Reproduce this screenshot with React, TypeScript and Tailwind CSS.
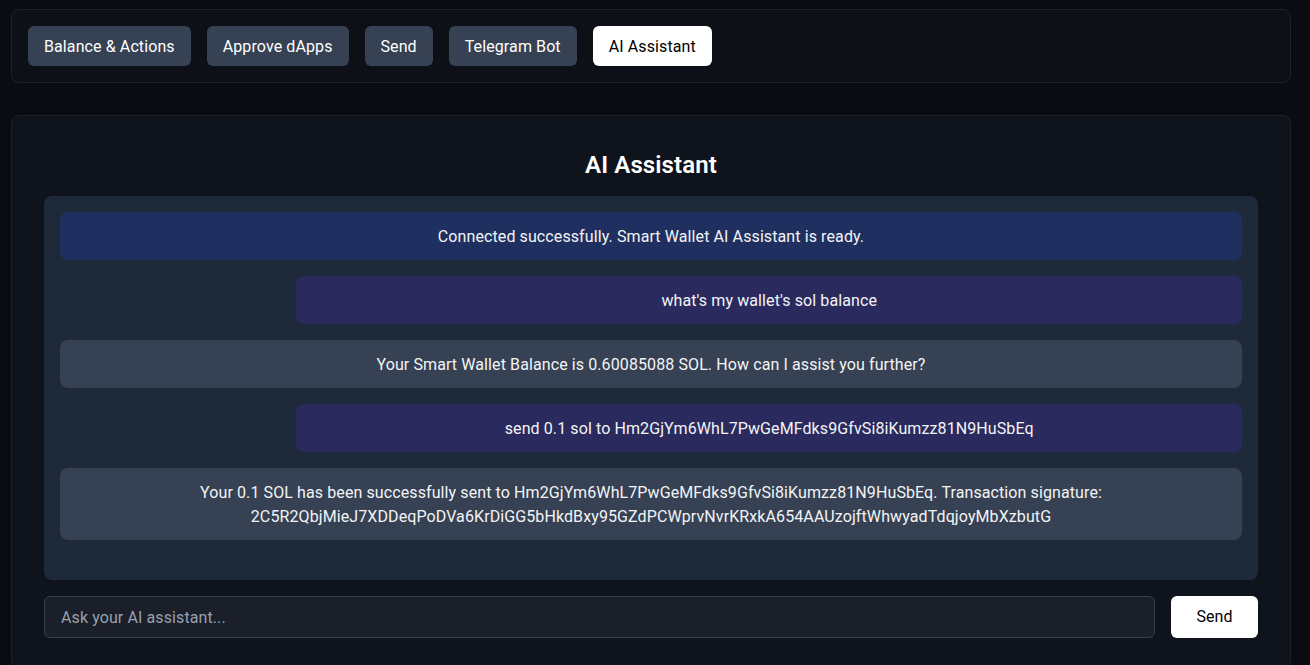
import { useState } from "react";

const tabs = ["Balance & Actions", "Approve dApps", "Send", "Telegram Bot", "AI Assistant"];

type Msg = { role: "system" | "user" | "assistant"; text: string };

const messages: Msg[] = [
  { role: "system", text: "Connected successfully. Smart Wallet AI Assistant is ready." },
  { role: "user", text: "what's my wallet's sol balance" },
  { role: "assistant", text: "Your Smart Wallet Balance is 0.60085088 SOL. How can I assist you further?" },
  { role: "user", text: "send 0.1 sol to Hm2GjYm6WhL7PwGeMFdks9GfvSi8iKumzz81N9HuSbEq" },
  {
    role: "assistant",
    text: "Your 0.1 SOL has been successfully sent to Hm2GjYm6WhL7PwGeMFdks9GfvSi8iKumzz81N9HuSbEq. Transaction signature: 2C5R2QbjMieJ7XDDeqPoDVa6KrDiGG5bHkdBxy95GZdPCWprvNvrKRxkA654AAUzojftWhwyadTdqjoyMbXzbutG",
  },
];

export default function App() {
  const [active, setActive] = useState("AI Assistant");
  const [input, setInput] = useState("");

  return (
    <div className="min-h-screen bg-[#0a0c11] pl-[11px] pt-[9px] font-['Roboto',sans-serif] tracking-[0.1px] text-white">
      <div className="w-[1280px]">
        <div className="mb-8 flex gap-4 rounded-lg border border-[#1c222c] bg-[#0d1017] p-4">
          {tabs.map((t) => (
            <button
              key={t}
              onClick={() => setActive(t)}
              className={`h-10 rounded-md px-4 pt-0.5 text-base ${
                active === t ? "bg-white text-black" : "bg-gray-700 text-white"
              }`}
            >
              {t}
            </button>
          ))}
        </div>

        <div className="rounded-lg border border-[#1c222c] bg-[#0f131c] p-8">
          <h2 className="mb-4 pt-0.5 text-center text-2xl leading-[30px] font-semibold">AI Assistant</h2>
          <div className="h-96 overflow-y-auto rounded-lg bg-gray-800 p-4">
            <div className="space-y-4">
              {messages.map((m, i) => (
                <div
                  key={i}
                  className={`rounded-lg px-3 pt-[13px] pb-[11px] text-center text-base text-gray-100 ${
                    m.role === "system"
                      ? "bg-[#1f3060]"
                      : m.role === "user"
                      ? "ml-auto w-4/5 bg-[#2a2a5e]"
                      : "bg-gray-700"
                  }`}
                >
                  {m.text}
                </div>
              ))}
            </div>
          </div>
          <div className="mt-4 flex gap-4">
            <input
              value={input}
              onChange={(e) => setInput(e.target.value)}
              placeholder="Ask your AI assistant..."
              className="h-[42px] flex-1 rounded-md border border-[#3a404b] bg-[#1a1f29] px-4 text-base text-white placeholder:text-gray-400 outline-none"
            />
            <button className="h-[42px] w-[87px] rounded-md bg-white text-base text-black">Send</button>
          </div>
        </div>
      </div>
    </div>
  );
}
